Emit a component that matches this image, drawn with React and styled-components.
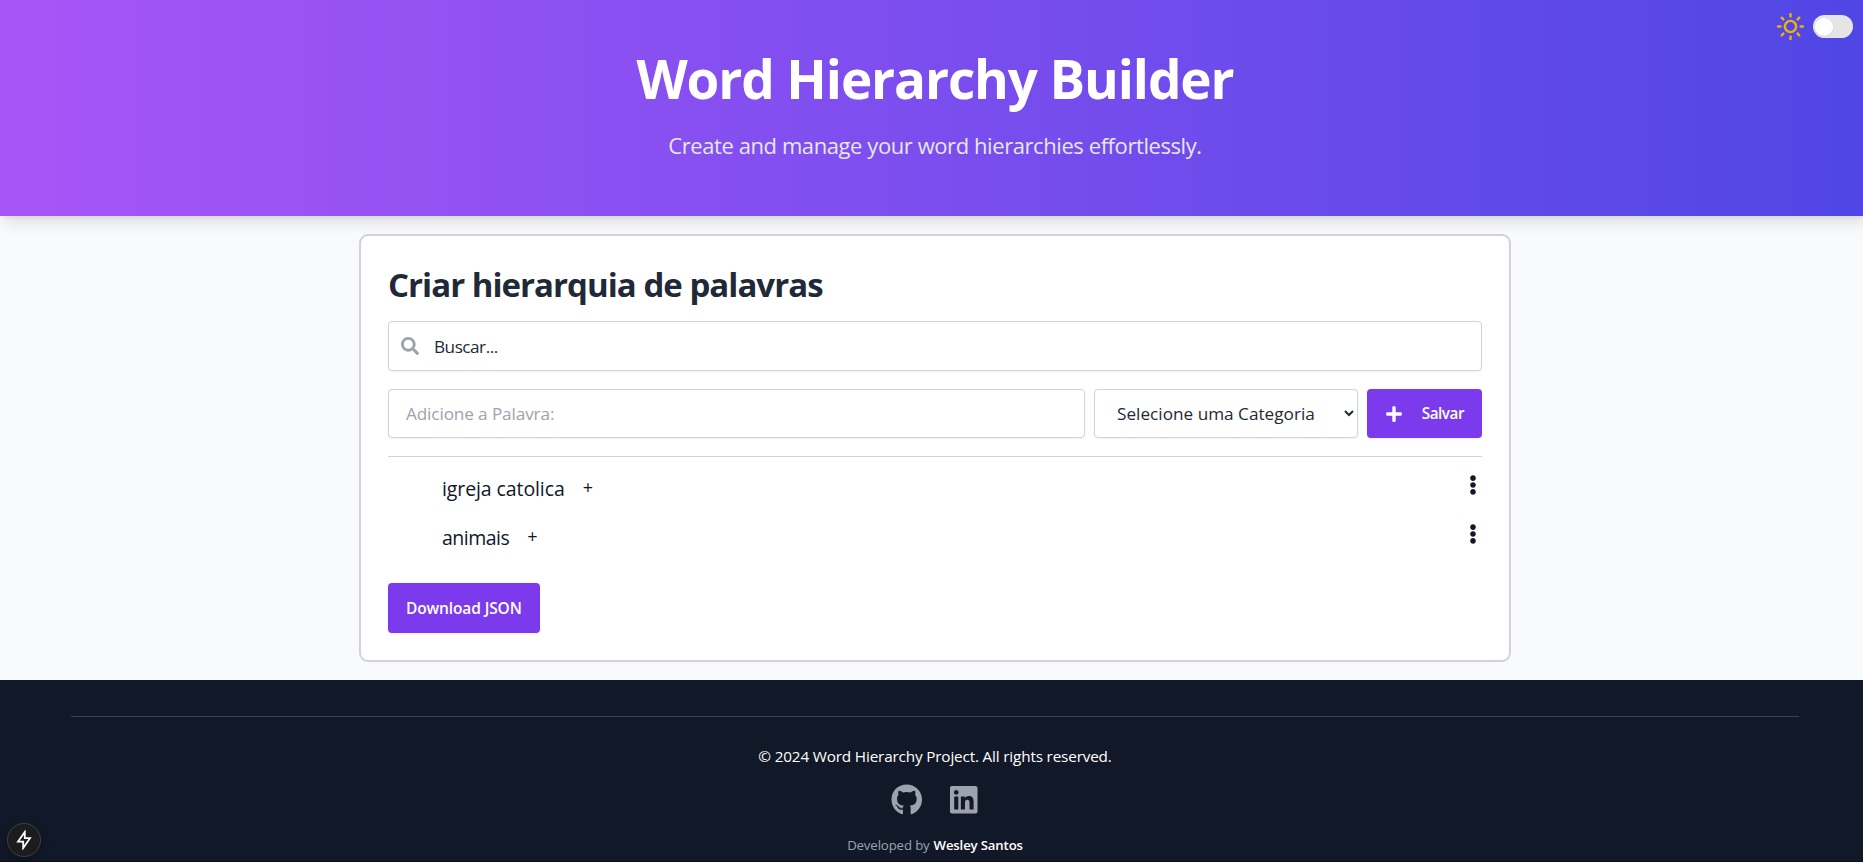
import React from "react";
import styled, { createGlobalStyle } from "styled-components";
import { FaSearch, FaPlus, FaEllipsisV, FaGithub, FaLinkedin } from "react-icons/fa";
import { FiSun } from "react-icons/fi";

const GlobalStyle = createGlobalStyle`
  *, *::before, *::after { box-sizing: border-box; }
  html { font-size: 18px; }
  html, body { height: 862px; overflow: hidden; }
  body {
    margin: 0;
    background: #f9fafb;
    color: #111827;
    font-family: "Open Sans", "Noto Sans", sans-serif;
    line-height: 1.5;
  }
  h1, h2, p, ul { margin: 0; padding: 0; }
  input, select, button { font: inherit; color: inherit; margin: 0; }
  svg { display: block; flex: none; }
`;

const Page = styled.div`
  width: 1870px;
  height: 862px;
  display: flex;
  flex-direction: column;
  overflow: hidden;
`;

/* Single run of text; size and tracking vary by role. */
const Text = styled.span`
  display: inline-block;
  white-space: nowrap;
  font-size: ${(p) => p.$size}px;
  font-weight: ${(p) => p.$weight || 400};
  letter-spacing: ${(p) => p.$track || 0}px;
`;

const Header = styled.header`
  height: 216px;
  flex: none;
  padding-top: 45px;
  display: flex;
  flex-direction: column;
  align-items: center;
  background: linear-gradient(to right, #a855f7, #4f46e5);
  box-shadow: 0 10px 15px -3px rgba(0, 0, 0, 0.1), 0 4px 6px -4px rgba(0, 0, 0, 0.1);
  position: relative;
  z-index: 1;
`;

const Title = styled.h1`
  color: #fff;
  line-height: 68px;
  height: 68px;
  font-size: 53px;
`;

const Subtitle = styled.p`
  color: #e5e7eb;
  margin-top: 17px;
  line-height: 31px;
`;

const ThemeControl = styled.div`
  position: absolute;
  top: 13px;
  left: 1777px;
  display: flex;
  align-items: center;
  gap: 9px;
  color: #eab308;
`;

const Switch = styled.button`
  width: 40px;
  height: 23px;
  padding: 2px;
  border: 0;
  border-radius: 12px;
  background: #e5e5e5;
  display: flex;
  align-items: center;
`;

const Knob = styled.span`
  width: 18px;
  height: 18px;
  border-radius: 50%;
  background: #fff;
  box-shadow: 0 1px 2px rgba(0, 0, 0, 0.08);
`;

const Main = styled.main`
  padding: 18px 0;
  flex: none;
`;

const Card = styled.section`
  width: 1152px;
  height: 428px;
  margin: 0 auto;
  padding: 27px;
  border: 2px solid #d1d2db;
  border-radius: 9px;
  background: #fff;
  display: flex;
  flex-direction: column;
`;

const CardTitle = styled.h2`
  color: #1f2937;
  line-height: 40px;
  height: 40px;
  padding-top: 2px;
  margin-bottom: 18px;
  font-size: 33px;
`;

const field = `
  border: 1px solid #d1d2db;
  border-radius: 4px;
  background: #fff;
  box-shadow: 0 1px 2px rgba(0, 0, 0, 0.05);
`;

const SearchBox = styled.label`
  ${field}
  height: 50px;
  padding-left: 12px;
  display: flex;
  align-items: center;
  gap: 15px;
  color: #9ca3af;
`;

const FieldInput = styled.input`
  flex: 1;
  min-width: 0;
  border: 0;
  outline: 0;
  padding: ${(p) => p.$drop || 0}px 0 0;
  background: transparent;
  color: #1f2937;
  font-size: 17.2px;
  letter-spacing: ${(p) => p.$track}px;
  &::placeholder { color: ${(p) => p.$hint}; opacity: 1; }
`;

const FormRow = styled.div`
  display: flex;
  gap: 9px;
  height: 49px;
  margin-top: 18px;
`;

const WordField = styled.div`
  ${field}
  width: 697px;
  padding: 0 17px;
  display: flex;
`;

const CategorySelect = styled.select`
  ${field}
  width: 264px;
  padding: 0 2px 0 18px;
  font-size: 17.2px;
  color: #1f2937;
`;

const PrimaryButton = styled.button`
  width: ${(p) => p.$width}px;
  height: ${(p) => p.$height}px;
  padding: ${(p) => p.$drop || 0}px 18px 0;
  border: 0;
  border-radius: 4px;
  background: #7c3aed;
  color: #fff;
  display: flex;
  align-items: center;
  justify-content: space-between;
  box-shadow: 0 1px 2px rgba(0, 0, 0, 0.08);
`;

const WordList = styled.ul`
  list-style: none;
  margin-top: 18px;
  border-top: 1px solid #d1d2db;
  padding-top: 7px;
  height: 127px;
`;

const WordItem = styled.li`
  height: 49px;
  padding: 0 0 0 54px;
  display: flex;
  align-items: center;
`;

const AddChild = styled.button`
  border: 0;
  background: none;
  padding: 0;
  margin: -2px 0 0 18px;
`;

const MenuButton = styled.button`
  border: 0;
  background: none;
  padding: 0;
  margin: -8px -1px 0 auto;
`;

const Footer = styled.footer`
  flex: 1;
  padding-top: 36px;
  background: #111827;
  border-bottom: 1px solid #0d0f1c;
  color: #fff;
`;

const FooterInner = styled.div`
  width: 1728px;
  margin: 0 auto;
  border-top: 1px solid #374151;
  padding-top: 26px;
  display: flex;
  flex-direction: column;
  align-items: center;
`;

const Copyright = styled.p`
  line-height: 24px;
  height: 24px;
`;

const Social = styled.div`
  display: flex;
  gap: 26px;
  margin-top: 17px;
  color: #9ca3af;
`;

const Credit = styled.p`
  display: flex;
  align-items: baseline;
  gap: 4px;
  margin-top: 20px;
  line-height: 18px;
  color: #9ca3af;
`;

const Author = styled(Text)`
  color: #fff;
`;

const DevBadge = styled.div`
  position: absolute;
  left: 7px;
  top: 823px;
  width: 34px;
  height: 34px;
  border-radius: 50%;
  border: 1px solid #3f3f46;
  background: #1c1c1e;
  display: flex;
  align-items: center;
  justify-content: center;
  box-shadow: 0 4px 12px rgba(0, 0, 0, 0.2);
`;

const WORDS = [
  { name: "igreja catolica", track: -0.1 },
  { name: "animais", track: -0.5 },
];

export default function App() {
  return (
    <Page>
      <GlobalStyle />
      <Header>
        <Title><Text $size={53} $weight={700} $track={-1.1}>Word Hierarchy Builder</Text></Title>
        <Subtitle><Text $size={22} $track={-0.42}>Create and manage your word hierarchies effortlessly.</Text></Subtitle>
        <ThemeControl>
          <FiSun size={27} strokeWidth={2.2} />
          <Switch aria-label="Theme"><Knob /></Switch>
        </ThemeControl>
      </Header>
      <Main>
        <Card>
          <CardTitle><Text $size={33} $weight={700} $track={-0.97}>Criar hierarquia de palavras</Text></CardTitle>
          <SearchBox>
            <FaSearch size={18} />
            <FieldInput placeholder="Buscar..." $hint="#1f2937" $track={-0.5} $drop={2} />
          </SearchBox>
          <FormRow>
            <WordField><FieldInput placeholder="Adicione a Palavra:" $hint="#9ca3af" $track={-0.13} /></WordField>
            <CategorySelect><option>Selecione uma Categoria</option></CategorySelect>
            <PrimaryButton $width={115} $height={49}>
              <FaPlus size={18} />
              <Text $size={15.3} $weight={600} $track={-0.5}>Salvar</Text>
            </PrimaryButton>
          </FormRow>
          <WordList>
            {WORDS.map((w) => (
              <WordItem key={w.name}>
                <Text $size={19.5} $track={w.track}>{w.name}</Text>
                <AddChild><Text $size={18}>+</Text></AddChild>
                <MenuButton aria-label="Menu"><FaEllipsisV size={20} /></MenuButton>
              </WordItem>
            ))}
          </WordList>
          <PrimaryButton $width={152} $height={50} $drop={2}>
            <Text $size={15.5} $weight={600} $track={-0.12}>Download JSON</Text>
          </PrimaryButton>
        </Card>
      </Main>
      <Footer>
        <FooterInner>
          <Copyright><Text $size={15.3} $track={-0.17}>© 2024 Word Hierarchy Project. All rights reserved.</Text></Copyright>
          <Social>
            <FaGithub size={31.5} />
            <FaLinkedin size={31.5} />
          </Social>
          <Credit>
            <Text $size={13.2} $track={-0.12}>Developed by</Text>
            <Author as="strong" $size={13.2} $weight={600} $track={-0.15}>Wesley Santos</Author>
          </Credit>
        </FooterInner>
      </Footer>
      <DevBadge>
        <svg width="18" height="20" viewBox="0 0 18 20" fill="none" stroke="#fff" strokeWidth="1.8">
          <path d="M9.8 2 L3 11.6 H8.2 V18 L15 8.2 H9.8 Z" />
        </svg>
      </DevBadge>
    </Page>
  );
}
